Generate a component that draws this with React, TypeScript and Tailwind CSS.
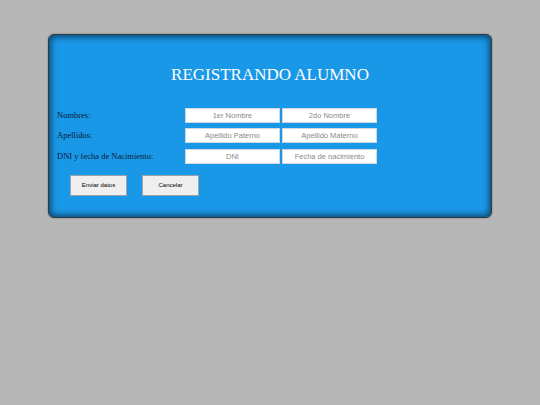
import React from "react";

const serif = { fontFamily: '"Liberation Serif", "Times New Roman", serif' };
const sans = { fontFamily: '"Liberation Sans", Arial, sans-serif' };

function Field({ ph }: { ph: string }) {
  return (
    <input
      readOnly
      placeholder={ph}
      style={sans}
      className="w-[95px] h-[15px] bg-white border border-[#cfd8e0] text-center text-[7.5px] text-[#555] placeholder:text-[#8a8a8a] outline-none px-0"
    />
  );
}

function Row({ label, a, b }: { label: string; a: string; b: string }) {
  return (
    <div className="flex items-center h-[20.5px]">
      <div style={serif} className="w-[128px] text-[8.5px] text-[#0b1a33]">
        {label}
      </div>
      <div className="flex gap-[2px]">
        <Field ph={a} />
        <Field ph={b} />
      </div>
    </div>
  );
}

export default function App() {
  return (
    <div className="w-[540px] h-[405px] bg-[#b7b7b7] overflow-hidden pt-[34px] pl-[48px]">
      <div className="w-[444px] h-[184px] rounded-[6px] bg-[#1a98e8] border border-[#2e3a44] shadow-[inset_0_0_6px_2px_rgba(0,0,0,0.55),0_0_2px_rgba(0,0,0,0.4)] pl-[8px]">
        <div
          style={serif}
          className="pt-[29px] pr-[8px] text-center text-white text-[17px] leading-[22px]"
        >
          REGISTRANDO ALUMNO
        </div>
        <div className="mt-[19px] flex flex-col">
          <Row label="Nombres:" a="1er Nombre" b="2do Nombre" />
          <Row label="Apellidos:" a="Apellido Paterno" b="Apellido Materno" />
          <Row label="DNI y fecha de Nacimiento:" a="DNI" b="Fecha de nacimiento" />
        </div>
        <div className="mt-[8px] ml-[13px] flex gap-[15px]">
          <button
            style={sans}
            className="w-[57px] h-[21px] bg-[#efefef] border border-[#9aa3aa] text-[6px] text-black"
          >
            Enviar datos
          </button>
          <button
            style={sans}
            className="w-[57px] h-[21px] bg-[#efefef] border border-[#9aa3aa] text-[6px] text-black"
          >
            Cancelar
          </button>
        </div>
      </div>
    </div>
  );
}
